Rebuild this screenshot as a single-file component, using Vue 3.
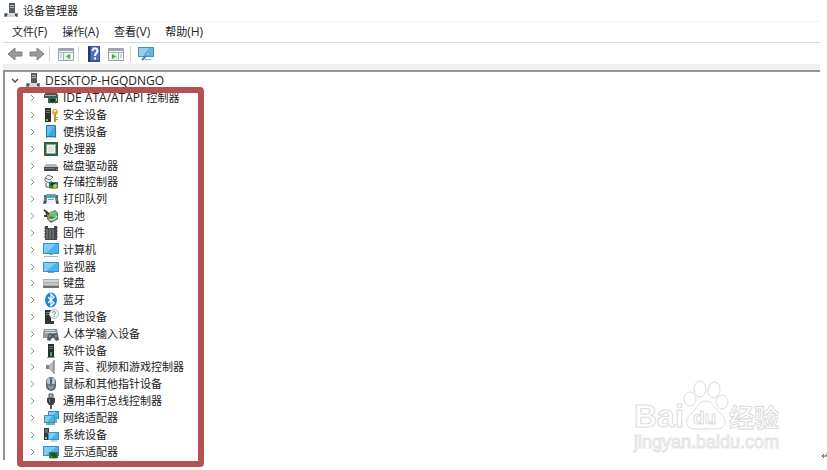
<script setup>
import { ref } from 'vue'

const menus = [['文件', '(F)'], ['操作', '(A)'], ['查看', '(V)'], ['帮助', '(H)']]

const screen = (x, y, w, h) =>
  `<rect x="${x}" y="${y}" width="${w}" height="${h}" fill="#3d8fc4"/><rect x="${x + 1}" y="${y + 1}" width="${w - 2}" height="${h - 2}" fill="#48b4ee"/><path d="M${x + 1} ${y + 1}h${w - 4}L${x + 3} ${y + h - 1}H${x + 1}z" fill="#7fcdf6"/>`
const tower =
  '<path d="M2 1h6v14H2z" fill="#2c302f"/><path d="M3 3h4v1H3zM3 5h4v1H3z" fill="#737a76"/><path d="M3 12h2v2H3z" fill="#55c46b"/>'

const icons = {
  computer:
    '<path d="M6 0h6v10H6z" fill="#555b5e"/><path d="M7 2h4v1H7zM7 4h4v1H7z" fill="#b6bbbd"/><path d="M1 10h5v4H1zM11 10h4v4h-4z" fill="#8b9195"/><path d="M5 10h7l1 4H4z" fill="#d6d9db"/><path d="M2 11h2v2H2zM12 11h2v2h-2z" fill="#45494c"/>',
  ide:
    '<path d="M1 5l2-3h10l2 3v3H1z" fill="#4d5551"/><path d="M2 5h11v1H2z" fill="#a2aaa4"/><path d="M5 7h10v6H5z" fill="#1d7150"/><path d="M7 9h5v3H7z" fill="#282f2c"/><path d="M13 8h1v3h-1zM6 13h1v1H6zM9 13h1v1H9zM12 13h1v1h-1z" fill="#d7b540"/>',
  security:
    tower + '<circle cx="12" cy="5" r="3" fill="#e2ad43"/><circle cx="12" cy="4" r="1" fill="#fff7dc"/><path d="M11 7h2v8h-2zM13 10h2v1h-2zM13 12h2v1h-2z" fill="#c69334"/>',
  portable:
    '<rect x="3" y="1" width="10" height="13" rx="1" fill="#2476b4"/><path d="M4 2h8v10H4z" fill="#3da5e8"/><path d="M4 2h7L5 12H4z" fill="#67bdf1"/><path d="M4 13h8v1H4z" fill="#a8d9f5"/>',
  cpu:
    '<path d="M1 1h14v14H1z" fill="#2f5c43"/><path d="M3 3h10v10H3z" fill="#88ac92"/><path d="M4 4h8v8H4z" fill="#f3f6ef"/><path d="M5 5h6v6H5z" fill="#dde4db"/>',
  disk:
    '<path d="M3 6h10l2 3H1z" fill="#b6b8b9"/><path d="M1 9h14v4H1z" fill="#45494b"/><path d="M2 10h10v1H2z" fill="#72777a"/><path d="M13 11h1v1h-1z" fill="#78df6a"/>',
  storage:
    '<path d="M2 4l3-3 5 2-3 3zM2 4v3l4 2 3-2" fill="#edf0ee" stroke="#6b736f"/><path d="M3 9v4h4" fill="none" stroke="#59605d"/><path d="M6 8h9v6H6z" fill="#24805a"/><path d="M8 9h4v3H8z" fill="#2a302c"/><circle cx="12" cy="12" r="2" fill="#d1c148"/><path d="M7 14h7v1H7z" fill="#c59f39"/>',
  printer:
    '<path d="M1 4h14v3H1z" fill="#5b696f"/><path d="M3 3h10v2H3z" fill="#8fa0a7"/><path d="M4 4h8l1 3H3z" fill="#49a9b6"/><path d="M1 7h3v6H0zM12 7h3l1 6h-3z" fill="#727e84"/><path d="M5 7h6l2 6H3z" fill="#eef6f7"/><path d="M5 8h6v1H5z" fill="#55b5bf"/><path d="M1 10h2v2H1zM13 10h2v2h-2z" fill="#444"/>',
  battery:
    '<path d="M4 6l8-4 3 3v6l-7 4-4-4z" fill="#397d49"/><ellipse cx="10" cy="6" rx="4" ry="3" fill="#77be75"/><path d="M6 11c3 2 6 0 8-3" fill="none" stroke="#b5dfac" stroke-width="2"/><path d="M1 2l5 4M1 8h4M3 5l4 4" stroke="#313e33" stroke-width="2"/><path d="M4 6l4 2-3 3z" fill="#bb8a45"/>',
  firmware:
    '<path d="M2 1h3v2h6V1h3v14H2z" fill="#43474a"/><path d="M4 4v10M7 4v10M10 4v10" stroke="#8b9093"/><path d="M1 3h1M1 6h1M1 9h1M1 12h1M14 3h1M14 6h1M14 9h1M14 12h1" stroke="#555"/>',
  pc: screen(0, 1, 16, 11) + '<path d="M6 12h4v1H6z" fill="#8cb5cb"/><path d="M1 14h14v1H1z" fill="#a8b9c1"/>',
  monitor: screen(0, 3, 16, 10) + '<path d="M5 13h6v1H5z" fill="#8a9aa2"/>',
  keyboard:
    '<path d="M0 4h16v9H0z" fill="#a8adb0"/><path d="M1 5h14v2H1z" fill="#d5d8d9"/><path d="M1 8h14v2H1z" fill="#c3c7c9"/><path d="M0 11h16v2H0z" fill="#6c7276"/>',
  bluetooth:
    '<ellipse cx="8" cy="8" rx="6" ry="7.5" fill="#1685df"/><path d="M5 5l6 6-3 3V2l3 3-6 6" fill="none" stroke="#fff" stroke-width="1.3"/>',
  other:
    tower + '<path d="M2 12h9v3H2z" fill="#343938"/><circle cx="11" cy="5" r="4.5" fill="#edf4f6" stroke="#a8bdc4"/><path d="M9.5 4c0-2 3-2 3 0 0 1-1.5 1-1.5 2M11 7v1" fill="none" stroke="#478ca5"/>',
  hid:
    '<path d="M1 3h13l1 5H0z" fill="#8b969d"/><path d="M2 4h10v1H2zM2 6h11v1H2z" fill="#d4dade"/><path d="M0 8h5v4H0z" fill="#8e999f"/><path d="M5 9c1-3 3-1 5-1s4-2 5 1l1 5-3 1-2-3H9l-2 3-3-1z" fill="#535d63"/><path d="M6 10h2M12 10h2" stroke="#c4cbcf"/>',
  software:
    '<path d="M5 1h6v14H5z" fill="#292f2c"/><path d="M6 3h4v1H6zM6 5h4v1H6z" fill="#6c756f"/><path d="M7 9h2v4H7z" fill="#4aa56c"/><path d="M4 14h8v1H4z" fill="#8b918e"/>',
  sound:
    '<path d="M3 6h3l5-4v12l-5-4H3z" fill="#7b8185"/><path d="M6 6l5-4v12l-5-4z" fill="#b6babd"/><path d="M11 1v14" stroke="#606669"/>',
  mouse:
    '<rect x="3" y="1" width="10" height="14" rx="5" fill="#5e6b76"/><path d="M4 7V5q0-3 3-3v6q-2 1-3-1M9 2q3 0 3 3v2q-1 2-3 1z" fill="#b6c4ce"/><path d="M5 9q3 2 6 0v2q-3 5-6 0z" fill="#8797a3"/><path d="M8 3v4" stroke="#275d8f"/>',
  usb:
    '<path d="M6 1h4v4H6z" fill="#b2b4b5" stroke="#555"/><path d="M4 5h8v4l-2 3H6L4 9z" fill="#3b3e40"/><path d="M6 6h1v3H6z" fill="#8b8e90"/><path d="M8 12v4" stroke="#555" stroke-width="2"/>',
  network:
    screen(5, 1, 11, 8) + screen(1, 5, 11, 8) + '<path d="M6 13v2M3 14h9M13 9v4" stroke="#49a67c" stroke-width="1.5"/>',
  system:
    '<path d="M1 1h5v12H1z" fill="#34393b"/><path d="M2 3h3M2 5h3" stroke="#959b9e"/><path d="M2 10h2v2H2z" fill="#62c7e5"/>' + screen(5, 5, 11, 8) + '<path d="M8 14h6" stroke="#9aa8af"/>',
  display:
    screen(0, 2, 16, 10) + '<path d="M6 8h9v6H6z" fill="#267a50"/><path d="M8 9h4v3H8z" fill="#343d36"/><circle cx="12" cy="12" r="2" fill="#39443b"/><path d="M7 14h7v1H7z" fill="#d3b950"/>'
}

const expanded = ref(true)
const devices = [
  { icon: 'ide', prefix: 'IDE ATA/ATAPI ', name: '控制器' },
  { icon: 'security', name: '安全设备' },
  { icon: 'portable', name: '便携设备' },
  { icon: 'cpu', name: '处理器' },
  { icon: 'disk', name: '磁盘驱动器' },
  { icon: 'storage', name: '存储控制器' },
  { icon: 'printer', name: '打印队列' },
  { icon: 'battery', name: '电池' },
  { icon: 'firmware', name: '固件' },
  { icon: 'pc', name: '计算机' },
  { icon: 'monitor', name: '监视器' },
  { icon: 'keyboard', name: '键盘' },
  { icon: 'bluetooth', name: '蓝牙' },
  { icon: 'other', name: '其他设备' },
  { icon: 'hid', name: '人体学输入设备' },
  { icon: 'software', name: '软件设备' },
  { icon: 'sound', name: '声音、视频和游戏控制器' },
  { icon: 'mouse', name: '鼠标和其他指针设备' },
  { icon: 'usb', name: '通用串行总线控制器' },
  { icon: 'network', name: '网络适配器' },
  { icon: 'system', name: '系统设备' },
  { icon: 'display', name: '显示适配器' }
]
</script>

<template>
  <div class="page">
    <main class="window">
      <header class="title">
        <svg class="icon" viewBox="0 0 16 16" v-html="icons.computer"></svg>
        <span>设备管理器</span>
      </header>

      <nav class="menu">
        <button v-for="[label, key] in menus" :key="key" type="button">{{ label }}<span class="latin">{{ key }}</span></button>
      </nav>

      <div class="toolbar">
        <div class="group arrows">
          <button type="button" aria-label="后退">
            <svg width="16" height="16" viewBox="0 0 16 16"><path d="M1 8l7-6v4h7v4H8v4z" fill="#999" stroke="#808080" /></svg>
          </button>
          <button type="button" aria-label="前进">
            <svg width="16" height="16" viewBox="0 0 16 16"><path d="M15 8L8 2v4H1v4h7v4z" fill="#999" stroke="#808080" /></svg>
          </button>
        </div>
        <div class="group console">
          <button type="button" aria-label="显示控制台树">
            <svg width="16" height="16" viewBox="0 0 16 16">
              <path d="M.5 2.5h15v12H.5z" fill="#f4f6f6" stroke="#9aa3a8" /><path d="M1 3h14v2H1z" fill="#9ba9b2" />
              <path d="M1 6.5h14M5.5 7v7M2 9h2M2 11h2" stroke="#a7b2b8" /><path d="M7 8h6v6H7z" fill="#dceddd" /><path d="M12 8v5L8 10.5z" fill="#4aa64d" />
            </svg>
          </button>
        </div>
        <div class="group">
          <button type="button" aria-label="帮助">
            <svg width="16" height="16" viewBox="0 0 16 16">
              <path d="M3 0h11v16H3z" fill="#3954a4" /><path d="M2 0h2v16H2z" fill="#243974" /><path d="M5 1h8v13H5z" fill="#5570c0" />
              <path d="M6.5 5c0-4 5-3 5 0 0 2-2.500 2-2.500 5M9 11.500v2" fill="none" stroke="#fff" stroke-width="2" />
            </svg>
          </button>
          <button type="button" aria-label="属性">
            <svg width="16" height="16" viewBox="0 0 16 16">
              <path d="M.5 2.5h15v12H.5z" fill="#f4f6f6" stroke="#9aa3a8" /><path d="M1 3h14v2H1z" fill="#9ba9b2" />
              <path d="M1 6.5h14M10.5 7v7M12 9h2M12 11h2" stroke="#a7b2b8" /><path d="M3 8h6v6H3z" fill="#dceddd" /><path d="M4 8v5l4-2.500z" fill="#4aa64d" />
            </svg>
          </button>
        </div>
        <div class="group">
          <button type="button" aria-label="扫描硬件改动">
            <svg width="16" height="16" viewBox="0 0 16 16">
              <path d="M0 1h16v10H0z" fill="#4590b4" /><path d="M1 2h14v8H1z" fill="#63b8df" /><path d="M1 2h10L5 10H1z" fill="#92d2ec" />
              <circle cx="10" cy="8" r="2" fill="#8fd0ea" stroke="#5d9dbb" /><path d="M8 10l-4 4" stroke="#4b84a0" stroke-width="2" /><path d="M7 13h6v1H7z" fill="#88b1c5" />
            </svg>
          </button>
        </div>
      </div>

      <section class="tree">
        <div class="row root">
          <button class="chevron" type="button" aria-label="DESKTOP-HGQDNGO" :aria-expanded="expanded" @click="expanded = !expanded">
            <svg width="8" height="8" viewBox="0 0 8 8"><path d="M1 2l3 3 3-3" fill="none" stroke="#444" stroke-width="1.3" /></svg>
          </button>
          <svg class="icon" viewBox="0 0 16 16" v-html="icons.computer"></svg>
          <span>DESKTOP-HGQDNGO</span>
        </div>
        <div v-if="expanded" class="branch">
          <div class="frame"></div>
          <ul>
            <li v-for="d in devices" :key="d.icon" class="row">
              <button class="chevron" type="button" :aria-label="d.name">
                <svg width="8" height="8" viewBox="0 0 8 8"><path d="M2 1l3 3-3 3" fill="none" stroke="#999" /></svg>
              </button>
              <svg class="icon" viewBox="0 0 16 16" v-html="icons[d.icon]"></svg>
              <span><span v-if="d.prefix" class="latin">{{ d.prefix }}</span>{{ d.name }}</span>
            </li>
          </ul>
        </div>
      </section>
    </main>

    <svg class="watermark" width="160" height="80" viewBox="0 0 160 80">
      <g fill="#fff" stroke="#dcdcdc">
        <text class="brand" x="4" y="49">Bai</text>
        <ellipse cx="60" cy="21" rx="6" ry="7" />
        <ellipse cx="70" cy="11" rx="6" ry="8" />
        <ellipse cx="84" cy="12" rx="6" ry="8" transform="rotate(12 84 12)" />
        <ellipse cx="92" cy="24" rx="6" ry="7" />
        <path d="M75 23c8 0 9 7 15 12 9 7 5 16-3 16H65c-10 0-11-10-3-16 5-4 6-12 13-12z" />
        <text class="du" x="63" y="46">du</text>
        <text class="exp" x="99" y="49">经验</text>
        <text class="site" x="4" y="70">jingyan.baidu.com</text>
      </g>
    </svg>
    <svg class="return" width="6" height="8" viewBox="0 0 6 8"><path d="M6 1v3H1M3 2L1 4l2 2" fill="none" stroke="#555" /></svg>
  </div>
</template>

<style>
body {
  margin: 0;
  background: #fff;
}
</style>

<style scoped>
.page {
  position: relative;
  display: flex;
  box-sizing: border-box;
  min-height: 100vh;
  padding: 0 7px 10px 3px;
  overflow: hidden;
  font: 11px/16px "Open Sans", "Noto Sans CJK SC", sans-serif;
  color: #222;
}
.window {
  flex: 1;
  display: flex;
  flex-direction: column;
}
button {
  display: flex;
  padding: 0;
  border: 0;
  background: none;
  font: inherit;
  color: inherit;
}
.icon {
  flex: none;
  width: 16px;
  height: 16px;
}
.latin {
  font-size: 12px;
  line-height: 1;
  white-space: pre;
}
.title {
  display: flex;
  align-items: center;
  gap: 4px;
  height: 21px;
}
.menu {
  display: flex;
  align-items: center;
  gap: 15px;
  height: 20px;
  padding-left: 9px;
  border-top: 1px solid #f2f2f2;
  border-bottom: 1px solid #d8d8d8;
}
.menu button {
  align-items: baseline;
}
.toolbar {
  display: flex;
  align-items: center;
  height: 21px;
  border-bottom: 6px solid #f0f0f0;
}
.group {
  display: flex;
  gap: 6px;
  padding: 0 6px 0 7px;
  border-left: 1px solid #d5d5d5;
}
.group.arrows {
  padding: 0 4px;
  border: 0;
}
.group.console {
  padding: 0 4px 0 8px;
}
.tree {
  flex: 1;
  display: flex;
  flex-direction: column;
  border-top: 2px solid #949494;
  border-left: 2px solid #949494;
}
.row {
  display: flex;
  align-items: center;
  gap: 4px;
  white-space: nowrap;
}
.chevron {
  width: 12px;
  justify-content: center;
}
.root {
  height: 18px;
  padding-left: 4px;
  font-size: 12px;
}
.branch {
  position: relative;
  flex: 1;
  display: flex;
}
ul {
  flex: 1;
  display: grid;
  grid-auto-rows: 1fr;
  margin: 0;
  padding: 0 0 0 22px;
  list-style: none;
}
.frame {
  position: absolute;
  top: -3px;
  bottom: -7px;
  left: 12px;
  width: 175px;
  border: 6px solid #b65152;
  border-radius: 4px;
  pointer-events: none;
}
.watermark {
  position: absolute;
  right: 37px;
  bottom: 12px;
}
.brand {
  font: bold 32px "Liberation Sans", sans-serif;
}
.du {
  font: bold 19px "Liberation Sans", sans-serif;
}
.exp {
  font: bold 25px "Noto Sans CJK SC", sans-serif;
}
.site {
  font: 18px "Liberation Sans", sans-serif;
  stroke: #e2e2e2;
}
.return {
  position: absolute;
  right: 0;
  bottom: 10px;
}
</style>
